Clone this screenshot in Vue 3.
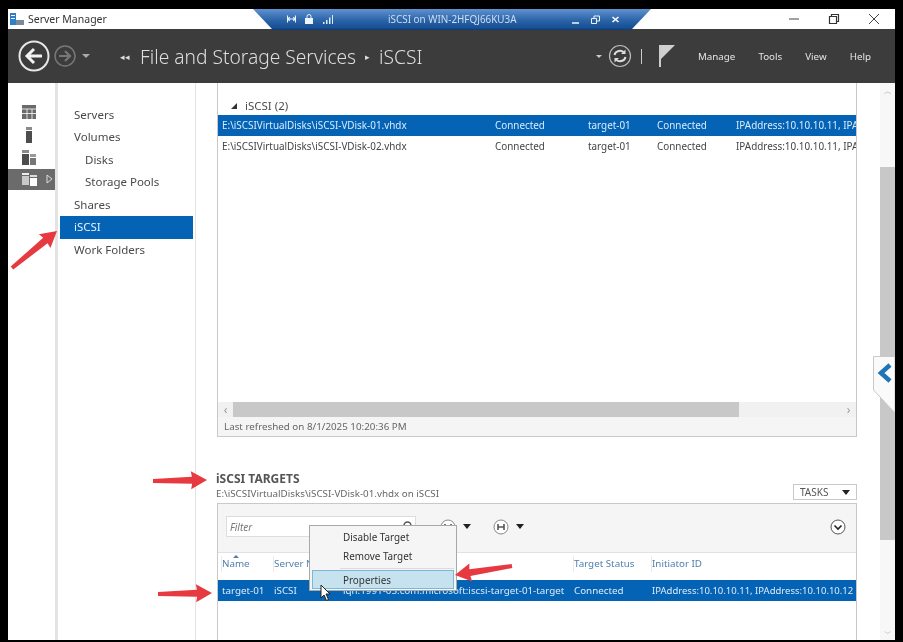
<script setup>
const navItems = [
  { label: 'Servers' },
  { label: 'Volumes' },
  { label: 'Disks', sub: true },
  { label: 'Storage Pools', sub: true },
  { label: 'Shares' },
  { label: 'iSCSI', active: true },
  { label: 'Work Folders' },
]

const menuLinks = ['Manage', 'Tools', 'View', 'Help']

const disks = [
  { path: 'E:\\iSCSIVirtualDisks\\iSCSI-VDisk-01.vhdx', selected: true },
  { path: 'E:\\iSCSIVirtualDisks\\iSCSI-VDisk-02.vhdx', selected: false },
]

// red annotation arrows, tail to tip
const arrows = [
  { x1: 12, y1: 268, x2: 57, y2: 231 },
  { x1: 153, y1: 481, x2: 207, y2: 480 },
  { x1: 158, y1: 594, x2: 212, y2: 593 },
  { x1: 512, y1: 566, x2: 455, y2: 575 },
]

// tapered shaft with a solid head, same shape the snipping tool draws
function arrowShape(a) {
  const angle = Math.atan2(a.y2 - a.y1, a.x2 - a.x1)
  const cos = Math.cos(angle)
  const sin = Math.sin(angle)
  const at = (along, across) =>
    `${(a.x1 + along * cos - across * sin).toFixed(1)},${(a.y1 + along * sin + across * cos).toFixed(1)}`
  const len = Math.hypot(a.x2 - a.x1, a.y2 - a.y1)
  const neck = len - 15
  return [
    at(0, -2),
    at(neck, -3.5),
    at(neck - 1, -9),
    at(len, 0),
    at(neck - 1, 9),
    at(neck, 3.5),
    at(0, 2),
  ].join(' ')
}
</script>

<template>
  <div class="screen">
    <div class="window">
      <div class="titlebar">
        <svg class="app-icon" width="14" height="14" viewBox="0 0 14 14">
          <rect x="0" y="1" width="6" height="12" fill="#2f7fc4" />
          <rect x="1" y="3" width="4" height="1" fill="#fff" />
          <rect x="1" y="6" width="4" height="1" fill="#fff" />
          <rect x="6" y="8" width="8" height="5" fill="#7a8a99" />
        </svg>
        <span class="app-name">Server Manager</span>
        <div class="win-controls">
          <svg width="12" height="12" viewBox="0 0 12 12"><path d="M1 6h10" stroke="#444" fill="none" /></svg>
          <svg width="12" height="12" viewBox="0 0 12 12"><path d="M1.500 3.500h7v7h-7zM3.500 3.500v-2h7v7h-2" stroke="#333" stroke-width="1.2" fill="none" /></svg>
          <svg width="12" height="12" viewBox="0 0 12 12"><path d="M1 1l10 10M11 1L1 11" stroke="#444" fill="none" /></svg>
        </div>
      </div>

      <header class="topbar">
        <div class="nav-buttons">
          <svg width="36" height="34" viewBox="0 0 36 34">
            <circle cx="17" cy="17" r="14.500" fill="none" stroke="#e8e8e8" stroke-width="2" />
            <path d="M25 17H11M17 10l-7 7 7 7" fill="none" stroke="#f2f2f2" stroke-width="3" />
          </svg>
          <svg width="24" height="24" viewBox="0 0 24 24">
            <circle cx="12" cy="12" r="10" fill="none" stroke="#777" stroke-width="1.500" />
            <path d="M6 12h10M12 7l5 5-5 5" fill="none" stroke="#777" stroke-width="2.200" />
          </svg>
          <span class="mini-caret"></span>
        </div>
        <div class="crumbs">
          <span class="crumb-mark">◂◂</span>
          <span>File and Storage Services</span>
          <span class="crumb-sep">▸</span>
          <span>iSCSI</span>
        </div>
        <div class="top-right">
          <span class="small-caret"></span>
          <svg width="24" height="24" viewBox="0 0 24 24">
            <circle cx="12" cy="12" r="10.500" fill="none" stroke="#bbb" stroke-width="1.200" />
            <path d="M6.500 11a5.500 5 0 0 1 10-2M17.500 13a5.500 5 0 0 1-10 2" fill="none" stroke="#ddd" stroke-width="2" />
            <path d="M17.500 5.500v4.500h-4.500M6.500 18.500v-4.500h4.500" fill="#ddd" />
          </svg>
          <span class="divider"></span>
          <svg class="flag" width="16" height="22" viewBox="0 0 16 22">
            <path d="M1 0v22" stroke="#ccc" stroke-width="2" />
            <path d="M2 0h14L2 14z" fill="#cfcfcf" />
          </svg>
          <nav class="menu">
            <span v-for="link in menuLinks" :key="link">{{ link }}</span>
          </nav>
        </div>
      </header>

      <div class="body">
        <aside class="rail">
          <div class="rail-item">
            <svg width="14" height="14" viewBox="0 0 14 14">
              <path d="M0 0h14v14H0z" fill="#6a6a6a" />
              <path d="M0 4h14M0 8.500h14M5 4v10M10 4v10" stroke="#fff" stroke-width="0.800" />
            </svg>
          </div>
          <div class="rail-item">
            <svg width="14" height="16" viewBox="0 0 14 16">
              <rect x="4" y="0" width="6" height="3" fill="#8a8a8a" />
              <rect x="4" y="4" width="6" height="12" fill="#4d4d4d" />
            </svg>
          </div>
          <div class="rail-item">
            <svg width="14" height="15" viewBox="0 0 14 15">
              <rect x="0" y="0" width="7" height="3" fill="#8a8a8a" />
              <rect x="0" y="4" width="7" height="11" fill="#4d4d4d" />
              <rect x="8" y="4" width="6" height="3" fill="#999" />
              <rect x="8" y="8" width="6" height="7" fill="#777" />
            </svg>
          </div>
          <div class="rail-item current">
            <svg width="15" height="14" viewBox="0 0 15 14">
              <rect x="0" y="1" width="7" height="2" fill="#eee" />
              <rect x="0" y="4" width="7" height="9" fill="#c9c9c9" />
              <rect x="8" y="3" width="7" height="2" fill="#ddd" />
              <rect x="8" y="6" width="7" height="8" fill="#fff" />
            </svg>
            <svg class="rail-tri" width="7" height="10" viewBox="0 0 7 10">
              <path d="M1 1l5 4-5 4z" fill="none" stroke="#ddd" />
            </svg>
          </div>
        </aside>

        <nav class="side">
          <div
            v-for="item in navItems"
            :key="item.label"
            class="side-item"
            :class="{ sub: item.sub, active: item.active }"
          >
            {{ item.label }}
          </div>
        </nav>

        <main class="content">
          <section class="disks">
            <div class="group-title"><span class="tri"></span>iSCSI (2)</div>
            <div class="disk-list">
              <div
                v-for="disk in disks"
                :key="disk.path"
                class="disk-row"
                :class="{ selected: disk.selected }"
              >
                <span>{{ disk.path }}</span>
                <span>Connected</span>
                <span>target-01</span>
                <span>Connected</span>
                <span class="ip">IPAddress:10.10.10.11, IPAddress:10.10.10.12</span>
              </div>
            </div>
            <div class="hscroll">
              <span class="hs-arrow">‹</span>
              <div class="hs-track"><div class="hs-thumb"></div></div>
              <span class="hs-arrow">›</span>
            </div>
            <div class="refreshed">Last refreshed on 8/1/2025 10:20:36 PM</div>
          </section>

          <section class="targets">
            <div class="targets-head">
              <div class="targets-title">
                <h2>iSCSI TARGETS</h2>
                <p>E:\iSCSIVirtualDisks\iSCSI-VDisk-01.vhdx on iSCSI</p>
              </div>
              <button class="tasks">TASKS <span class="caret"></span></button>
            </div>
            <div class="targets-panel">
              <div class="toolbar">
                <div class="filter">
                  <span>Filter</span>
                  <svg width="11" height="11" viewBox="0 0 11 11">
                    <circle cx="5.500" cy="4.500" r="3.500" fill="none" stroke="#555" stroke-width="1.500" />
                  </svg>
                </div>
                <span class="tool-btn">
                  <svg width="16" height="16" viewBox="0 0 16 16">
                    <circle cx="8" cy="8" r="7" fill="#fff" stroke="#888" />
                    <path d="M5 5v6M11 5v6M5 8h6" stroke="#555" stroke-width="1.600" fill="none" />
                  </svg>
                  <span class="caret"></span>
                </span>
                <span class="tool-btn">
                  <svg width="16" height="16" viewBox="0 0 16 16">
                    <circle cx="8" cy="8" r="7" fill="#fff" stroke="#888" />
                    <path d="M5 5v6M11 5v6M5 8h6" stroke="#555" stroke-width="1.600" fill="none" />
                  </svg>
                  <span class="caret"></span>
                </span>
                <svg class="expand" width="16" height="16" viewBox="0 0 16 16">
                  <circle cx="8" cy="8" r="7" fill="#fff" stroke="#555" />
                  <path d="M4.500 6.500L8 10l3.500-3.500" fill="none" stroke="#222" stroke-width="1.600" />
                </svg>
              </div>
              <div class="t-row t-header">
                <span class="sorted">Name</span>
                <span>Server Name</span>
                <span></span>
                <span>Target Status</span>
                <span>Initiator ID</span>
              </div>
              <div class="t-row t-selected">
                <span>target-01</span>
                <span>iSCSI</span>
                <span>iqn.1991-05.com.microsoft:iscsi-target-01-target</span>
                <span>Connected</span>
                <span class="t-ip">IPAddress:10.10.10.11, IPAddress:10.10.10.12</span>
              </div>
            </div>
          </section>
        </main>

        <div class="vscroll">
          <span class="vs-arrow">︿</span>
          <div class="vs-track"><div class="vs-thumb"></div></div>
          <span class="vs-arrow">﹀</span>
        </div>
      </div>
    </div>

    <!-- RDP connection bar sits over the title bar -->
    <div class="rdp-bar">
      <div class="rdp-icons">
        <svg width="9" height="8" viewBox="0 0 10 8"><path d="M0.500 0v8M9.500 0v8M1 4h8M3 2l-2 2 2 2M7 2l2 2-2 2" stroke="#eef4fb" fill="none" stroke-width="1.300" /></svg>
        <svg width="8" height="10" viewBox="0 0 8 10"><rect x="0" y="4" width="8" height="6" fill="#eef4fb" /><path d="M2 4V2.500a2 2 0 0 1 4 0V4" stroke="#eef4fb" fill="none" /></svg>
        <svg width="11" height="9" viewBox="0 0 11 9"><path d="M1 7h1.500v2H1zM4 5h1.500v4H4zM7 2.500h1.500V9H7zM10 0h1v9h-1z" fill="#dfe9f5" /></svg>
      </div>
      <span class="rdp-name">iSCSI on WIN-2HFQJ66KU3A</span>
      <div class="rdp-controls">
        <svg width="9" height="9" viewBox="0 0 9 9"><path d="M1 8h7" stroke="#eef4fb" stroke-width="1.500" /></svg>
        <svg width="9" height="9" viewBox="0 0 9 9"><path d="M0.500 3.500h5v5h-5zM3 3.500V1h5.500v5H5.500" stroke="#eef4fb" fill="none" /></svg>
        <svg width="9" height="9" viewBox="0 0 9 9"><path d="M1.500 2l6 5M7.500 2l-6 5" stroke="#fff" stroke-width="1.600" /></svg>
      </div>
    </div>

    <!-- collapsed task pane tab -->
    <svg class="side-tab" width="22" height="58" viewBox="0 0 22 58">
      <path d="M22 0.500H0.500V34L22 57z" fill="#fafafa" stroke="#c8c8c8" />
      <path d="M17 9l-9 8 9 8" fill="none" stroke="#1f74b8" stroke-width="4.500" />
    </svg>

    <div class="ctx-menu">
      <div class="ctx-item">Disable Target</div>
      <div class="ctx-item">Remove Target</div>
      <div class="ctx-sep"></div>
      <div class="ctx-item hover">Properties</div>
    </div>

    <svg class="cursor" width="12" height="18" viewBox="0 0 12 18">
      <path d="M1 1v13l3-3 2.500 5.500 2-1L6 10h4z" fill="#fff" stroke="#222" />
    </svg>

    <svg class="arrows" width="903" height="642" viewBox="0 0 903 642">
      <polygon
        v-for="(a, i) in arrows"
        :key="i"
        :points="arrowShape(a)"
        fill="#e63a40"
      />
    </svg>
  </div>
</template>

<style>
html,
body {
  margin: 0;
  background: #000;
}
</style>

<style scoped>
.screen {
  position: relative;
  width: 903px;
  height: 642px;
  box-sizing: border-box;
  padding: 9px 8px 2px;
  background: #000;
  overflow: hidden;
  font-family: "Noto Sans", "Open Sans", sans-serif;
  font-size: 11px;
  color: #444;
  filter: blur(0.35px);
}

.window {
  height: 100%;
  display: flex;
  flex-direction: column;
  background: #fff;
}

.titlebar {
  height: 20px;
  flex: none;
  display: flex;
  align-items: center;
  padding-left: 2px;
  background: #fff;
}

.app-name {
  margin-left: 4px;
  font-size: 10.500px;
  color: #333;
}

.win-controls {
  margin-left: auto;
  display: flex;
  gap: 28px;
  padding-right: 15px;
}

.topbar {
  height: 54px;
  flex: none;
  display: flex;
  align-items: center;
  background: #3c3c3c;
  color: #e6e6e6;
}

.nav-buttons {
  display: flex;
  align-items: center;
  width: 107px;
  padding-left: 9px;
  box-sizing: border-box;
  flex: none;
}

.mini-caret {
  margin-left: 5px;
  border-left: 4px solid transparent;
  border-right: 4px solid transparent;
  border-top: 4px solid #aaa;
}

.crumbs {
  display: flex;
  align-items: center;
  font-size: 19.200px;
  font-weight: 300;
  color: #dedede;
  white-space: nowrap;
}

.crumb-mark {
  font-size: 9px;
  width: 25px;
  padding-left: 5px;
  box-sizing: border-box;
}

.crumb-sep {
  font-size: 9px;
  margin: 0 9px;
}

.top-right {
  margin-left: auto;
  display: flex;
  align-items: center;
}

.small-caret {
  margin-right: 6px;
  border-left: 3px solid transparent;
  border-right: 3px solid transparent;
  border-top: 3px solid #ccc;
}

.divider {
  width: 1px;
  height: 15px;
  margin: 0 17px 0 9px;
  background: #ccc;
}

.flag {
  margin-right: 23px;
}

.menu {
  display: flex;
  gap: 23px;
  padding-right: 24px;
  font-size: 9.800px;
  color: #e4e4e4;
}

.body {
  flex: 1;
  min-height: 0;
  display: flex;
}

.rail {
  width: 50px;
  flex: none;
  padding-top: 18px;
  box-sizing: border-box;
  border-right: 3px solid #e3e3e3;
}

.rail-item {
  position: relative;
  width: 47px;
  height: 22.500px;
  display: flex;
  align-items: center;
  padding-left: 14px;
  box-sizing: border-box;
}

.rail-item.current {
  height: 21px;
  background: #6b6b6b;
}

.rail-tri {
  margin-left: 9px;
}

.side {
  width: 138px;
  flex: none;
  box-sizing: border-box;
  padding: 20.500px 2px 0 2px;
  border-right: 1px solid #e3e3e3;
}

.side-item {
  height: 22.500px;
  line-height: 22.500px;
  padding-left: 14px;
  font-size: 11.500px;
  color: #4a4a4a;
}

.side-item.sub {
  padding-left: 25px;
}

.side-item.active {
  background: #0563b5;
  color: #e6f0fa;
}

.content {
  flex: 1;
  min-width: 0;
  padding: 0 23px 0 21px;
  display: flex;
  flex-direction: column;
}

.disks {
  height: 354px;
  flex: none;
  display: flex;
  flex-direction: column;
  box-sizing: border-box;
  border: 1px solid #c9c9c9;
  border-top: none;
}

.group-title {
  margin-top: 15px;
  height: 17px;
  box-sizing: border-box;
  padding: 0 0 2px 13px;
  display: flex;
  align-items: center;
  font-size: 11.500px;
  color: #4d4d4d;
}

.tri {
  width: 0;
  height: 0;
  margin-right: 8px;
  border-bottom: 6px solid #333;
  border-left: 6px solid transparent;
}

.disk-list {
  flex: 1;
  min-height: 0;
}

.disk-row {
  height: 21px;
  display: grid;
  grid-template-columns: 272px 93px 69px 79px 1fr;
  align-items: center;
  padding-left: 4px;
  padding-bottom: 1px;
  box-sizing: border-box;
  font-size: 9.900px;
  color: #444;
  white-space: nowrap;
  overflow: hidden;
}

.disk-row span:not(:first-child) {
  margin-left: 1px;
}

.disk-row.selected {
  background: #0563b5;
  color: #dcebfa;
}

.ip {
  overflow: hidden;
}

.hscroll {
  height: 15px;
  flex: none;
  display: flex;
  align-items: center;
  background: #f1f1f1;
  color: #999;
}

.hs-arrow {
  width: 15px;
  text-align: center;
  font-size: 12px;
  line-height: 15px;
}

.hs-track {
  flex: 1;
  height: 15px;
}

.hs-thumb {
  width: 506px;
  height: 100%;
  background: #c8c8c8;
}

.refreshed {
  height: 19px;
  flex: none;
  line-height: 19px;
  padding-left: 6px;
  background: #f5f5f5;
  font-size: 9.800px;
  color: #666;
}

.targets {
  flex: 1;
  min-height: 0;
  display: flex;
  flex-direction: column;
  padding-top: 33px;
}

.targets-head {
  height: 33px;
  flex: none;
  display: flex;
  justify-content: space-between;
  align-items: flex-end;
}

.targets-title {
  padding-bottom: 2px;
  margin-left: -1px;
}

.targets-head h2 {
  margin: 0;
  font-size: 12px;
  line-height: 16px;
  font-weight: 700;
  color: #555;
}

.targets-head p {
  margin: 0;
  font-size: 9.800px;
  line-height: 14px;
  color: #666;
}

.tasks {
  width: 64px;
  height: 16px;
  margin-bottom: 3px;
  padding: 0 6px;
  display: flex;
  align-items: center;
  justify-content: space-between;
  box-sizing: border-box;
  border: 1px solid #c9c9c9;
  background: #fff;
  font-family: inherit;
  font-size: 10px;
  color: #555;
}

.caret {
  display: inline-block;
  border-left: 4.500px solid transparent;
  border-right: 4.500px solid transparent;
  border-top: 5px solid #222;
}

.targets-panel {
  flex: 1;
  min-height: 0;
  border: 1px solid #c9c9c9;
  border-bottom: none;
}

.toolbar {
  height: 49px;
  box-sizing: border-box;
  display: flex;
  align-items: center;
  padding: 0 10px 3px 8px;
  background: #f5f5f5;
  border-bottom: 1px solid #e2e2e2;
}

.filter {
  width: 190px;
  height: 21px;
  box-sizing: border-box;
  display: flex;
  align-items: center;
  justify-content: space-between;
  padding: 0 2px 0 3px;
  background: #fff;
  border: 1px solid #ddd;
  font-size: 10px;
  font-style: italic;
  color: #777;
}

.tool-btn {
  display: flex;
  align-items: center;
  gap: 7px;
  margin-left: 24px;
}

.tool-btn + .tool-btn {
  margin-left: 22px;
}

.expand {
  margin-left: auto;
}

.t-row {
  display: grid;
  grid-template-columns: 52px 69px 231px 78px 1fr;
  align-items: center;
  padding-left: 4px;
  white-space: nowrap;
  overflow: hidden;
}

.t-header {
  height: 27px;
  box-sizing: border-box;
  padding-bottom: 5px;
  font-size: 9.800px;
  color: #4f7fb0;
}

.t-header span {
  height: 22px;
  line-height: 22px;
  box-shadow: -4px 0 0 -3px #ececec;
}

.t-header span:empty {
  box-shadow: none;
}

.sorted {
  position: relative;
}

.sorted::before {
  content: "";
  position: absolute;
  left: 11px;
  top: 2px;
  border-left: 3.500px solid transparent;
  border-right: 3.500px solid transparent;
  border-bottom: 3px solid #4f7fb0;
}

.t-selected {
  height: 21px;
  background: #0563b5;
  color: #dcebfa;
  font-size: 9.800px;
}

.t-ip {
  font-size: 9.500px;
}

.vscroll {
  width: 15px;
  flex: none;
  display: flex;
  flex-direction: column;
  background: #f7f7f7;
  color: #aaa;
}

.vs-arrow {
  height: 15px;
  font-size: 8px;
  line-height: 15px;
  text-align: center;
}

.vs-track {
  flex: 1;
  padding-top: 69px;
}

.vs-thumb {
  height: 373px;
  background: #c8c8c8;
}

.rdp-bar {
  position: absolute;
  left: 253px;
  top: 9px;
  width: 398px;
  height: 21px;
  display: flex;
  align-items: center;
  box-sizing: border-box;
  padding: 0 31px 1px 34px;
  clip-path: polygon(0 0, 100% 0, 95% 100%, 5% 100%);
  background: linear-gradient(#5f92cf, #2a63a8 55%, #174f94 90%, #0d3a73);
  color: #cfdff1;
  font-size: 9.900px;
}

.rdp-icons {
  display: flex;
  align-items: center;
  gap: 9px;
}

.rdp-name {
  margin-left: 55px;
  white-space: nowrap;
}

.rdp-controls {
  margin-left: auto;
  display: flex;
  gap: 11px;
}

.side-tab {
  position: absolute;
  left: 873px;
  top: 356px;
}

.ctx-menu {
  position: absolute;
  left: 309px;
  top: 525px;
  width: 148px;
  height: 66px;
  box-sizing: border-box;
  padding: 2px;
  background: #f5f5f5;
  border: 1px solid #a8a8a8;
  font-size: 9.900px;
  color: #333;
}

.ctx-item {
  height: 19px;
  line-height: 19px;
  padding-left: 31px;
}

.ctx-sep {
  height: 1px;
  margin: 2px 0 1px 28px;
  background: #dcdcdc;
}

.ctx-item.hover {
  margin-right: 0;
  height: 19px;
  box-sizing: border-box;
  padding-left: 30px;
  line-height: 18px;
  background: #c6e2ef;
  border: 1px solid #7fb6d6;
}

.cursor {
  position: absolute;
  left: 320px;
  top: 584px;
}

.arrows {
  position: absolute;
  left: 0;
  top: 0;
  pointer-events: none;
}
</style>
